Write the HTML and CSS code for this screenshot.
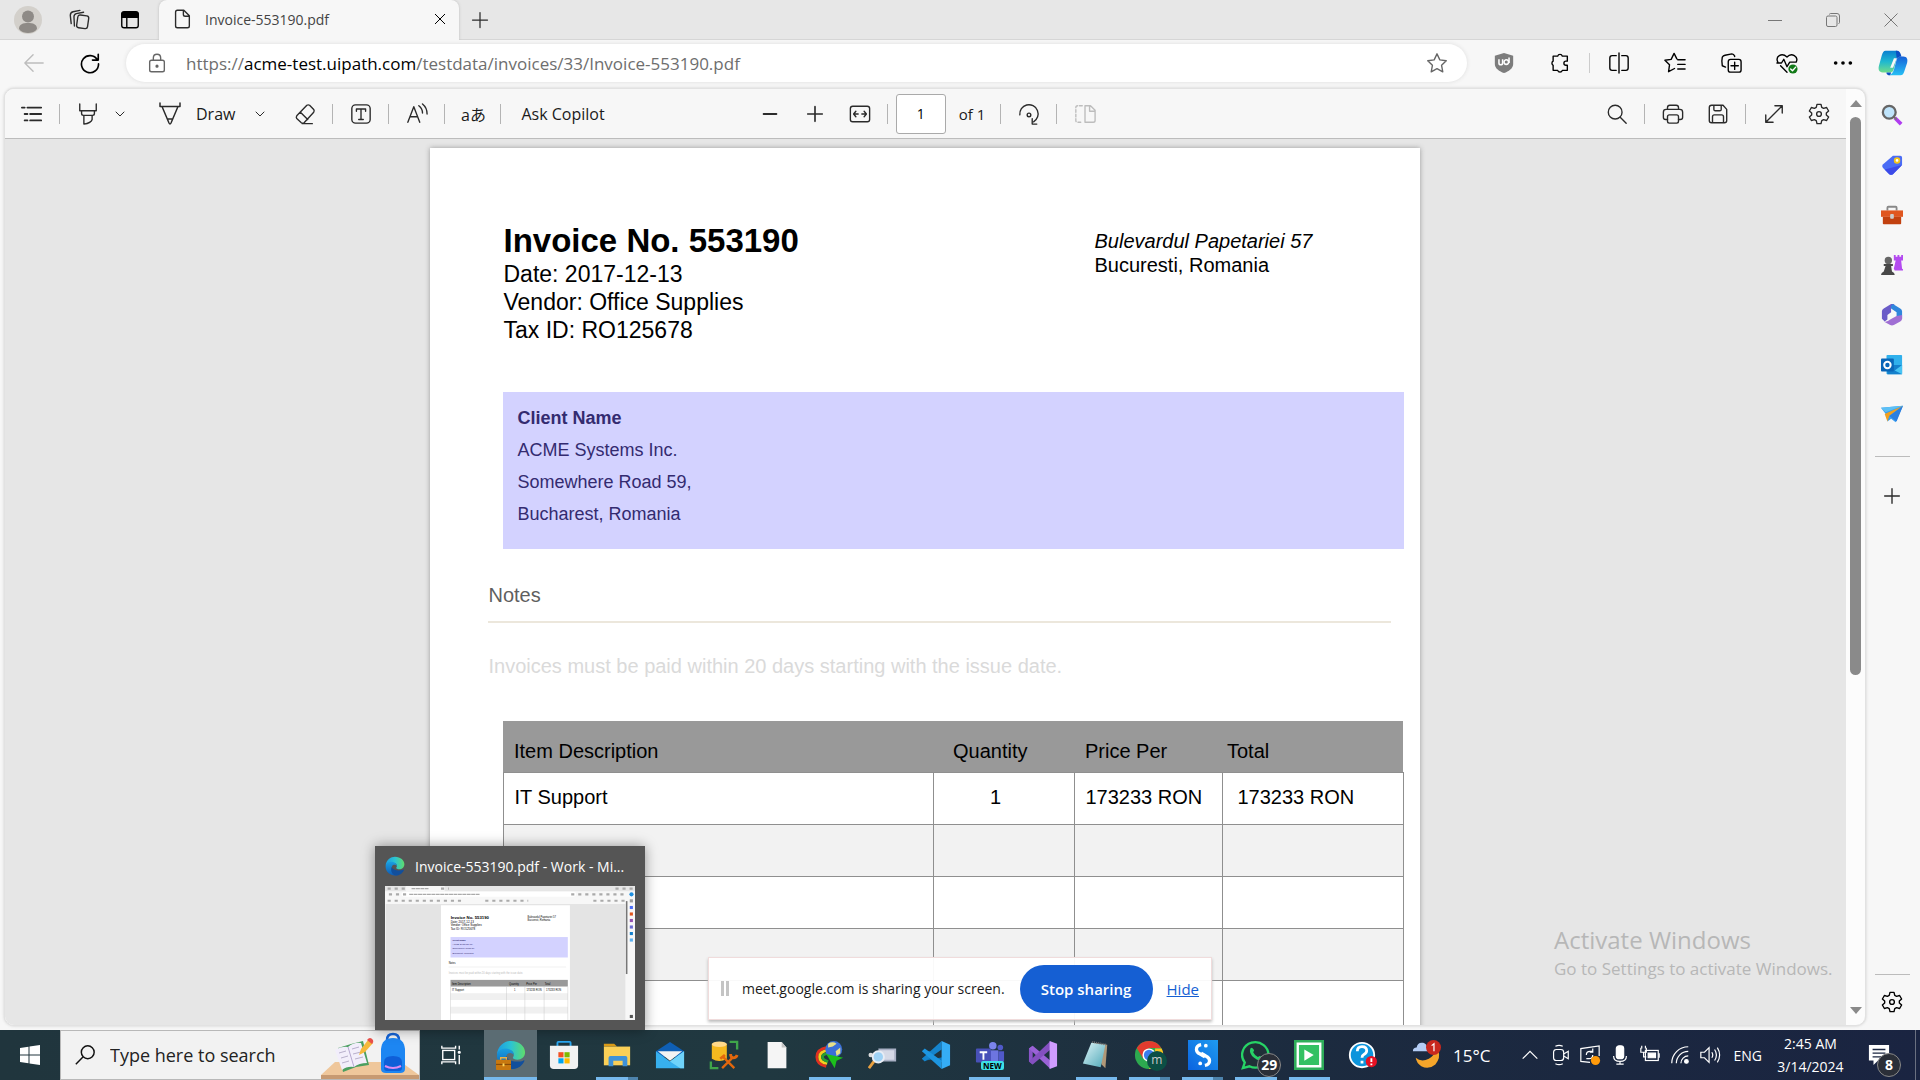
FILE: index.html
```html
<!DOCTYPE html>
<html lang="en">
<head>
<meta charset="utf-8">
<title>Invoice-553190.pdf</title>
<link rel="stylesheet" href="styles.css">
</head>
<body>
<svg class="defs" aria-hidden="true">
  <defs>
    <linearGradient id="edgeTop" x1="0" y1="0" x2="1" y2="0"><stop offset="0" stop-color="#1b9de2"/><stop offset=".5" stop-color="#2cc3d2"/><stop offset="1" stop-color="#5fdc6b"/></linearGradient>
    <linearGradient id="edgeBody" x1="0" y1="0" x2="0" y2="1"><stop offset="0" stop-color="#1aa0e0"/><stop offset="1" stop-color="#0f5bb5"/></linearGradient>
    <linearGradient id="copA" x1="0" y1="0" x2="0" y2="1"><stop offset="0" stop-color="#0a7fd0"/><stop offset=".5" stop-color="#1fb8d0"/><stop offset="1" stop-color="#6fdc8c"/></linearGradient>
    <linearGradient id="copB" x1="0" y1="0" x2="0" y2="1"><stop offset="0" stop-color="#1560d8"/><stop offset="1" stop-color="#27c0f5"/></linearGradient>
    <linearGradient id="paper" x1="0" y1="0" x2="1" y2="1"><stop offset="0" stop-color="#dff5f8"/><stop offset="1" stop-color="#4fa8b8"/></linearGradient>
    <linearGradient id="sBlue" x1="0" y1="1" x2="1" y2="0"><stop offset="0" stop-color="#0a63e0"/><stop offset="1" stop-color="#1f9bf0"/></linearGradient>
  </defs>
  <symbol id="chev" viewBox="0 0 12 12"><path d="M2 4l4 4 4-4"/></symbol>
  <symbol id="gear" viewBox="0 0 24 24"><path d="M9.800 1.500h4.400l.8 3.300 2 1.100 3.300-1 2.200 3.800-2.500 2.300v2l2.500 2.300-2.200 3.800-3.300-1-2 1.100-.8 3.300H9.800L9 19.200l-2-1.100-3.300 1-2.200-3.800L4 13v-2L1.500 8.700l2.200-3.800 3.300 1 2-1.100z"/><circle cx="12" cy="12" r="2.600"/></symbol>
  <symbol id="edge" viewBox="0 0 32 32">
    <path fill="url(#edgeTop)" d="M1 15C2 6 9 1 16 1c9 0 15 6 15 12 0 5-4 8-8 8-3 0-5-1-5-2s1-1 1-3c0-3-2-5-5-5-6 0-9 2-13 4z"/>
    <path fill="url(#edgeBody)" d="M1 17c0-5 4-8 9-8 5 0 9 3 9 7-2-3-7-3-8 1-1 6 4 12 12 12-2 1-4 2-7 2C8 31 1 25 1 17z"/>
    <path fill="#124f9c" d="M11 17c-3 5 0 14 7 14 6 0 10-4 12-8 1-1 0-2-1-1-2 1-4 1-6 1-6 0-11-2-12-6z"/>
  </symbol>
</svg>

<div class="browser">
  <header class="tabs">
    <button class="tb-btn" aria-label="Profile"><svg class="avatar" viewBox="0 0 28 28"><circle cx="14" cy="14" r="14" fill="#d3d0cb"/><circle cx="14" cy="10.500" r="6" fill="#8e8a86"/><path d="M5 23c0-5 4-6 9-6s9 1 9 6c-2 3-6 4-9 4s-7-1-9-4z" fill="#8e8a86"/></svg></button>
    <button class="tb-btn" aria-label="Workspaces"><svg class="ic" viewBox="0 0 24 24"><rect x="10" y="7" width="12" height="14" rx="2.500" transform="rotate(8 16 14)"/><path d="M7 18.500l-.5-10c0-2 1-3 2.500-3.500l8-1.500M3.500 16L2.500 7c0-2 1-3.500 3-4L13 1.500"/></svg></button>
    <button class="tb-btn" aria-label="Tab actions"><svg class="ic dark" viewBox="0 0 24 24"><rect x="3" y="3.500" width="18" height="17" rx="2.500"/><path d="M3 9V6q0-3 3-3h12q3 0 3 3v3z" fill="#000"/><path d="M8.500 9v11"/></svg></button>
    <div class="tab">
      <svg class="ic" viewBox="0 0 24 24"><path d="M5 4.500q0-2 2-2h7l6 6v11q0 2-2 2H7q-2 0-2-2zM13.500 2.500v4.500q0 2 2 2H20"/></svg>
      <span class="tab-title">Invoice-553190.pdf</span>
      <button class="close" aria-label="Close tab"><svg class="ic sm dark" viewBox="0 0 14 14"><path d="M2 2l10 10M12 2L2 12"/></svg></button>
    </div>
    <button class="new-tab" aria-label="New tab"><svg class="ic" viewBox="0 0 24 24"><path d="M12 3v18M3 12h18"/></svg></button>
    <div class="win-ctl">
      <button aria-label="Minimize"><svg class="ic sm" viewBox="0 0 14 14"><path d="M0 7.500h14"/></svg></button>
      <button aria-label="Restore"><svg class="ic sm" viewBox="0 0 14 14"><rect x=".5" y="3" width="10.500" height="10.500" rx="1.500"/><path d="M3.500 1.500q0-1 1-1H11q2.500 0 2.500 2.500v6.500q0 1-1 1"/></svg></button>
      <button aria-label="Close"><svg class="ic sm" viewBox="0 0 14 14"><path d="M.5.500l13 13M13.500.500l-13 13"/></svg></button>
    </div>
  </header>

  <nav class="addr">
    <button class="nav-btn" aria-label="Back"><svg class="ic faint" viewBox="0 0 24 24"><path d="M22 12H2M11 3l-9 9 9 9"/></svg></button>
    <button class="nav-btn" aria-label="Refresh"><svg class="ic dark" viewBox="0 0 24 24"><path stroke-width="1.800" d="M20 8.500A9.300 9.300 0 1 0 21.300 13M21 2.500v6.300h-6.300"/></svg></button>
    <div class="pill">
      <svg class="ic gray" viewBox="0 0 24 24"><rect x="4" y="9" width="16" height="12.500" rx="2"/><path d="M8 9V6.500Q8 2.500 12 2.500T16 6.500V9"/><circle cx="12" cy="15.500" r="1" fill="#444"/></svg>
      <span class="url">https://<b>acme-test.uipath.com</b>/testdata/invoices/33/Invoice-553190.pdf</span>
      <svg class="ic gray" viewBox="0 0 24 24"><path d="M12 2l3.100 6.600 7 .9-5.100 5 1.300 7.200L12 18.200l-6.300 3.500L7 14.500l-5.100-5 7-.9z"/></svg>
    </div>
    <button class="ext" aria-label="uBlock Origin"><svg class="icon-22" viewBox="0 0 24 24"><path d="M12 1l10 3v9c0 5-5 8-10 10C7 21 2 18 2 13V4z" fill="#7d7d7d"/><path d="M6.500 8v4q0 2 2 2t2-2V8M17.500 6v6" fill="none" stroke="#fff" stroke-width="1.700"/><circle cx="14.500" cy="11" r="2.500" fill="none" stroke="#fff" stroke-width="1.700"/></svg></button>
    <button class="ext" aria-label="Extensions"><svg class="ic dark" viewBox="0 0 24 24"><path d="M4.500 4.500h5a2.600 2.600 0 0 1 5 0h5.500v5.500h-1.500a2 2 0 0 0 0 4.500h1.500v5.500h-5.500a2.600 2.600 0 0 1-5 0h-5v-5.500a2.600 2.600 0 0 1 0-4.500z"/></svg></button>
    <i class="sep tall"></i>
    <button class="ext" aria-label="Split screen"><svg class="ic dark" viewBox="0 0 24 24"><path d="M9 4H4.500Q2 4 2 6.500v11Q2 20 4.500 20H9M15 4h4.500Q22 4 22 6.500v11q0 2.500-2.500 2.500H15M12 1v22"/></svg></button>
    <button class="ext" aria-label="Favorites"><svg class="ic dark" viewBox="0 0 24 24"><path d="M15 8.500h8M15 13.500h8M15 18.500h8M11.500 18L5 21.500l1-7.500-5-5 6.800-1L11 1.500l3 6"/></svg></button>
    <button class="ext" aria-label="Collections"><svg class="ic dark" viewBox="0 0 24 24"><rect x="9" y="8" width="14" height="14" rx="2.500"/><path d="M16 11v8M12 15h8M6 16.500L2.500 15q-1-5 0-9.500 1-1.500 3-2L13 2q2 0 3 2.500V5"/></svg></button>
    <button class="ext" aria-label="Browser essentials"><svg class="ic dark" viewBox="0 0 24 24"><path d="M2 11C-1 5 6 0 12 5.500 17 0 25 5 22 11M1 12h5l2.500-4 3.500 8 3-5h6M5 15l7 7"/><circle cx="18.500" cy="18.500" r="5" fill="#127a18" stroke="none"/><path d="M16 18.500l2 2 3.500-4" stroke="#fff"/></svg></button>
    <button class="ext" aria-label="More"><svg class="icon-22" viewBox="0 0 24 24"><circle cx="4" cy="12" r="2"/><circle cx="12" cy="12" r="2"/><circle cx="20" cy="12" r="2"/></svg></button>
    <button class="copilot" aria-label="Copilot"><svg class="icon-30" viewBox="0 0 32 32"><path fill="url(#copA)" d="M8 3h12c2 0 2 2 1 4l-4 15c-1 3-2 4-4 4H5c-4 0-5-3-4-7L4 8c1-3 2-5 4-5z"/><path fill="url(#copB)" d="M27 9c4 0 5 3 4 7l-3 9c-1 3-2 4-4 4H12c3-1 4-3 5-6l3-11c1-2 2-3 4-3z"/><path fill="#0b4fc4" d="M20 3c3 0 4 2 5 6-3 0-4 1-5 3l-1-9zM9 26h5l-1 3c-3 0-4-1-4-3z"/><path fill="#f7f7f7" d="M17 11h3l-4 10h-3z"/></svg></button>
  </nav>

  <div class="workspace">
    <main class="viewer">
      <div class="viewer-main">
        <div class="toolbar">
          <div class="group">
            <button class="tool" aria-label="Contents"><svg class="ic" viewBox="0 0 24 24"><path stroke-width="2" d="M7 5h15M10 12h12M10 19h12M1 5h3M4 12h3M4 19h3"/></svg></button>
            <i class="sep"></i>
            <button class="tool" aria-label="Highlight"><svg class="ic" viewBox="0 0 24 24"><path d="M3 1v7.500h18V1M5 8.500v3q0 2 2 2h10q2 0 2-2v-3M7.500 13.500V23q8-1 9-5v-4.500"/></svg></button>
            <button class="tiny" aria-label="Highlight options"><svg class="ic chev"><use href="#chev"/></svg></button>
            <button class="draw"><svg class="ic" viewBox="0 0 24 24"><path d="M2 1v3.500h20V1M4 4.500L11 21q1 2 2 0l7-16.500M9.500 17h5"/></svg>Draw</button>
            <button class="tiny" aria-label="Draw options"><svg class="ic chev"><use href="#chev"/></svg></button>
            <button class="tool erase" aria-label="Erase"><svg class="ic" viewBox="0 0 24 24"><path d="M3 14L14 2.500q1.500-1 3 0l4.500 4.500q1 1.500 0 3L11 21.500q-1.500 1-3 0L3 17q-1-1.500 0-3zM7 10l8 8M9 22.500h11"/></svg></button>
            <i class="sep"></i>
            <button class="tool" aria-label="Add text"><svg class="ic" viewBox="0 0 24 24"><rect x="2" y="2" width="20" height="20" rx="4"/><path d="M7 9V6.500h10V9M12 6.500V18M9.500 18h5"/></svg></button>
            <i class="sep"></i>
            <button class="tool" aria-label="Read aloud"><svg class="ic" viewBox="0 0 24 24"><path d="M2 21L8.500 4 15 21M4.500 15h8M14 3q4 3 4 8M18 1q5 4 5 11"/></svg></button>
            <i class="sep"></i>
            <button class="tool aa" aria-label="Translate">aあ</button>
            <i class="sep"></i>
            <button class="ask">Ask Copilot</button>
          </div>
          <div class="group mid">
            <button class="zoom" aria-label="Zoom out"><svg class="ic" viewBox="0 0 24 24"><path stroke-width="2" d="M5 12h14"/></svg></button>
            <button class="zoom" aria-label="Zoom in"><svg class="ic" viewBox="0 0 24 24"><path stroke-width="1.800" d="M12 4v16M4 12h16"/></svg></button>
            <button class="zoom" aria-label="Fit to width"><svg class="ic" viewBox="0 0 24 24"><rect x="1.500" y="3.500" width="21" height="17" rx="2.500"/><path d="M10 12H5m2.500-3L5 12l2.500 3M14 12h5m-2.500-3l2.500 3-2.500 3"/></svg></button>
            <i class="sep"></i>
            <input class="page-no" type="text" value="1" aria-label="Page number">
            <span class="of">of 1</span>
            <i class="sep"></i>
            <button class="tool" aria-label="Rotate"><svg class="ic" viewBox="0 0 24 24"><path d="M2 13A10 10 0 1 1 17 20.500M15.500 17v6h5"/><circle cx="12" cy="13" r="2"/></svg></button>
            <i class="sep"></i>
            <button class="tool" aria-label="Page view"><svg class="ic faint" viewBox="0 0 24 24"><path d="M12 3h6l5 5v11q0 2-2 2h-9zM17 3v6h6"/><path stroke-dasharray="3 2" d="M9 3H4Q2 3 2 5v14q0 2 2 2h5"/></svg></button>
          </div>
          <div class="group end">
            <button class="tool" aria-label="Find"><svg class="ic" viewBox="0 0 24 24"><circle cx="10" cy="10" r="7.500"/><path d="M15.500 15.500L22 22"/></svg></button>
            <i class="sep"></i>
            <button class="tool" aria-label="Print"><svg class="ic" viewBox="0 0 24 24"><path d="M6 18H4q-2.500 0-2.500-2.500V10q0-3 3-3h15q3 0 3 3v5.500Q22.500 18 20 18h-2M6 7V5q0-2.500 2.500-2.500h7Q18 2.500 18 5v2"/><rect x="6" y="13" width="12" height="9" rx="2"/></svg></button>
            <button class="tool save" aria-label="Save"><svg class="ic" viewBox="0 0 24 24"><path d="M5 2.500h12.500L21.500 7v12q0 2.500-2.500 2.500H5Q2.500 21.500 2.500 19V5Q2.500 2.500 5 2.500zM7.500 2.500V7q0 1.500 1.500 1.500h5q1.500 0 1.500-1.500V2.500M6 21.500V15q0-2 2-2h8q2 0 2 2v6.500"/></svg></button>
            <i class="sep"></i>
            <button class="tool" aria-label="Full screen"><svg class="ic" viewBox="0 0 24 24"><path d="M3 21L21 3M13 3h8v8M3 13v8h8"/></svg></button>
            <button class="tool save" aria-label="Settings"><svg class="ic"><use href="#gear"/></svg></button>
          </div>
        </div>
        <div class="canvas">
          <article class="sheet">
            <div class="inv-head">
              <div>
                <h1>Invoice No. 553190</h1>
                <p>Date: 2017-12-13</p>
                <p>Vendor: Office Supplies</p>
                <p>Tax ID: RO125678</p>
              </div>
              <address><em>Bulevardul Papetariei 57</em><br>Bucuresti, Romania</address>
            </div>
            <section class="client">
              <strong>Client Name</strong>
              <p>ACME Systems Inc.</p>
              <p>Somewhere Road 59,</p>
              <p>Bucharest, Romania</p>
            </section>
            <section class="notes">
              <h2>Notes</h2>
              <p>Invoices must be paid within 20 days starting with the issue date.</p>
            </section>
            <table class="items">
              <colgroup><col class="c-item"><col class="c-qty"><col class="c-price"><col></colgroup>
              <thead><tr><th>Item Description</th><th class="h-qty">Quantity</th><th>Price Per</th><th class="h-total">Total</th></tr></thead>
              <tbody>
                <tr><td>IT Support</td><td class="qty">1</td><td>173233 RON</td><td class="total">173233 RON</td></tr>
                <tr><td></td><td></td><td></td><td></td></tr>
                <tr><td></td><td></td><td></td><td></td></tr>
                <tr><td></td><td></td><td></td><td></td></tr>
                <tr><td></td><td></td><td></td><td></td></tr>
              </tbody>
            </table>
          </article>
        </div>
      </div>
      <div class="scroll"><i class="up"></i><i class="thumb"></i><i class="down"></i></div>
    </main>

    <aside class="side">
      <button aria-label="Search"><svg class="icon-22" viewBox="0 0 24 24"><path d="M15 15l7 7" stroke="#b03cf0" stroke-width="4"/><path d="M13 13l4 4" stroke="#777" stroke-width="2"/><circle cx="9" cy="9" r="7" fill="#bfe4fb" stroke="#666" stroke-width="2.500"/></svg></button>
      <button aria-label="Shopping"><svg class="icon-22" viewBox="0 0 24 24"><path d="M13 2h8q2 0 2 2v8L13 22q-2 1.500-4 0l-7-7q-1.500-2 0-3.500z" fill="#4a6cf5"/><path d="M4 17l19-5-10 10q-2 1.500-4 0z" fill="#3c4ae8"/><circle cx="17.500" cy="7" r="2.500" fill="#fff" stroke="#f5c518" stroke-width="2"/></svg></button>
      <button aria-label="Tools"><svg class="icon-22" viewBox="0 0 24 24"><path d="M7 7V4q0-1 1-1h8q1 0 1 1v3" fill="none" stroke="#888" stroke-width="2"/><path d="M0 7h24v7H0z" fill="#e0561f"/><path d="M2 14h20v7q0 1-1 1H3q-1 0-1-1z" fill="#c2410f"/><rect x="10" y="11" width="4" height="5" rx="1" fill="#ccc"/></svg></button>
      <button aria-label="Games"><svg class="icon-22" viewBox="0 0 24 24"><circle cx="8" cy="7" r="4" fill="#666"/><path d="M3 11h10v2h-2l1 6q3 1 3 4H0q0-3 3-4l2-6H3z" fill="#484848"/><path d="M14 1h2v2h2V1h2v2h2V1h2v6h-2l1 9q2 1 1 2h-9l-1-2 2-9h-2z" fill="#b44bf0"/></svg></button>
      <button aria-label="Microsoft 365"><svg class="icon-22" viewBox="0 0 24 24"><path d="M11 0q2-1 4 0l-4 3v6l-4 3v5l-3 2-3-3V8q0-2 2-3z" fill="#6a5cc8"/><path d="M13 0l8 5q2 1 2 3v8l-6-3V9l-6-4q-1-3 2-5z" fill="#2f86dc"/><path d="M23 12v4q0 2-2 3l-7 4q-2 1-4 0l-7-4q4 1 7-2l7-4z" fill="#a06fd4"/></svg></button>
      <button aria-label="Outlook"><svg class="icon-22" viewBox="0 0 24 24"><rect x="6" y="1" width="17" height="21" rx="1" fill="#30b0ec"/><path d="M6 12h17v10H7z" fill="#1480cc"/><path d="M23 12l-8 6 8 4z" fill="#48c4f4"/><rect x="0" y="5" width="14" height="14" rx="1" fill="#0a66b8"/><circle cx="7" cy="12" r="3.500" fill="none" stroke="#fff" stroke-width="2.200"/></svg></button>
      <button aria-label="Drop"><svg class="icon-22" viewBox="0 0 24 24"><path d="M0 4l24-2-8 18-5-4-4 3-1-7z" fill="#3a9ff0"/><path d="M24 2L4 11l3 8 2-6z" fill="#f0a020"/><path d="M24 2L9 13l8 6z" fill="#2b7fe0"/><path d="M0 4l24-2L5 9z" fill="#5cc0f5"/></svg></button>
      <hr>
      <button aria-label="Customize"><svg class="ic" viewBox="0 0 24 24"><path d="M12 4v16M4 12h16"/></svg></button>
      <hr class="push">
      <button aria-label="Sidebar settings"><svg class="ic dark"><use href="#gear"/></svg></button>
    </aside>
  </div>
</div>

<div class="watermark"><p>Activate Windows</p><small>Go to Settings to activate Windows.</small></div>

<div class="share">
  <i class="grip"></i>
  <span>meet.google.com is sharing your screen.</span>
  <button>Stop sharing</button>
  <a href="#hide">Hide</a>
</div>

<div class="preview">
  <div class="preview-title"><svg class="icon-20"><use href="#edge"/></svg><span>Invoice-553190.pdf - Work - Mi...</span></div>
  <svg class="mini" viewBox="0 0 1920 1029" aria-hidden="true">
    <rect width="1920" height="1029" fill="#f7f7f7"/><rect width="1920" height="40" fill="#e6e6e6"/><rect x="159" width="299" height="42" fill="#f7f7f7"/>
    <rect x="126" y="45" width="1341" height="37" rx="18" fill="#fff"/><rect x="5" y="138" width="1841" height="891" fill="#e4e4e4"/>
    <rect x="430" y="148" width="990" height="881" fill="#fff"/>
    <rect x="1850" y="116" width="12" height="560" fill="#777"/>
    <g stroke="#aaa" stroke-width="16" stroke-dasharray="24 30"><path d="M20 20h150M430 20h60M1770 20h140M30 64h140M1430 64h430M20 113h590M770 113h330M1600 113h240"/></g>
    <path d="M186 64h540M204 20h130" stroke="#aaa" stroke-width="9" stroke-dasharray="30 4"/>
    <circle cx="1893" cy="64" r="16" fill="#1e8fe0"/>
    <g stroke-width="24"><path d="M1880 114h24" stroke="#999"/><path d="M1880 165h24" stroke="#4a6cf5"/><path d="M1880 215h24" stroke="#e0561f"/><path d="M1880 265h24" stroke="#9050b0"/><path d="M1880 315h24" stroke="#6a6ad0"/><path d="M1880 365h24" stroke="#1480cc"/><path d="M1880 415h24" stroke="#5ab0f0"/><path d="M1880 1002h24" stroke="#555"/></g>
    <g font-family="Liberation Sans, Arial, sans-serif" font-size="23" fill="#000">
      <text x="504" y="251" font-size="33" font-weight="bold">Invoice No. 553190</text><text x="504" y="282">Date: 2017-12-13</text><text x="504" y="311">Vendor: Office Supplies</text><text x="504" y="339">Tax ID: RO125678</text>
      <text x="1095" y="248" font-size="20">Bulevardul Papetariei 57</text><text x="1095" y="272" font-size="20">Bucuresti, Romania</text>
      <rect x="503" y="392" width="901" height="157" fill="#d3d2ff"/>
      <g font-size="18" fill="#332b70"><text x="518" y="424" font-weight="bold">Client Name</text><text x="518" y="456">ACME Systems Inc.</text><text x="518" y="487">Somewhere Road 59,</text><text x="518" y="519">Bucharest, Romania</text></g>
      <text x="489" y="602" font-size="20">Notes</text><path d="M488 622h903" stroke="#ddd" stroke-width="3"/><text x="489" y="673" font-size="20" fill="#bbb">Invoices must be paid within 20 days starting with the issue date.</text>
      <rect x="503" y="721" width="901" height="51" fill="#999"/>
      <path d="M503 824h901v52H503zM503 928h901v52H503z" fill="#f0f0f0"/>
      <path d="M503 772v257M933 772v257M1074 772v257M1222 772v257M1404 772v257" stroke="#bbb" stroke-width="3"/>
      <g font-size="20"><text x="514" y="758">Item Description</text><text x="953" y="758">Quantity</text><text x="1085" y="758">Price Per</text><text x="1227" y="758">Total</text><text x="514" y="805">IT Support</text><text x="991" y="805">1</text><text x="1086" y="805">173233 RON</text><text x="1237" y="805">173233 RON</text></g>
    </g>
  </svg>
</div>

<footer class="taskbar">
  <button class="start" aria-label="Start"><svg class="icon-20" viewBox="0 0 20 20"><path fill="#fff" d="M0 3l8.500-1.200v7.700H0zM9.500 1.600L20 0v9.500H9.500zM0 10.500h8.500v7.700L0 17zM9.500 10.500H20V20L9.500 18.400z"/></svg></button>
  <label class="search">
    <svg class="icon-22" viewBox="0 0 24 24"><circle cx="15" cy="9" r="7" fill="none" stroke="#111" stroke-width="1.600"/><path d="M10 14L2 22" stroke="#111" stroke-width="1.600"/></svg>
    <input type="text" placeholder="Type here to search" aria-label="Type here to search">
    <svg class="art" viewBox="0 0 98 48"><path d="M14 31h66l18 13H0z" fill="#efc79b"/><path d="M0 44h98v4H0z" fill="#c79a72"/><path d="M17 17l13-4 12-3 6 24-13 2-13 5z" fill="#4a9f60"/><path d="M14 19q6-4 13-3 6-5 13-4l6 20q-8 0-13 4-7-1-12 3z" fill="#f2eefb"/><path d="M27 16l6 20" stroke="#b5a8d0"/><path d="M18 22l7-2M20 27l7-2M21 32l7-2M31 18l7-2M32 23l8-2M34 28l8-2" stroke="#b8b0cc"/><path d="M38 24l2-6 7-9 5 3-8 9z" fill="#f6b93b"/><path d="M46 9q3-4 6 0 1 2-1 4z" fill="#e8504a"/><path d="M66 9q0-6 6-6t6 6" fill="none" stroke="#1565d8" stroke-width="2.500"/><path d="M60 18q1-11 12-11t12 11v20q0 4-5 4H65q-5 0-5-4z" fill="#1d86f2"/><path d="M63 31q0-6 9-6t9 6v6q0 3-3 3H66q-3 0-3-3z" fill="#0f5fd8"/><path d="M64 35q8 4 16 0" stroke="#e08cf0" stroke-width="2" fill="none"/></svg>
  </label>
  <button class="taskview" aria-label="Task view"><svg class="icon-22" viewBox="0 0 24 24" fill="none" stroke="#fff" stroke-width="1.500"><rect x="3" y="7" width="13" height="10"/><path d="M2 2v2.500h15V2M2 22v-2.500h15V22M21 2v4M21 12v10"/><circle cx="21" cy="9" r="1" fill="#fff"/></svg></button>

  <div class="apps">
    <button class="app on run" aria-label="Edge"><svg viewBox="0 0 32 32"><use href="#edge"/><rect x="0" y="21" width="16" height="11" rx="1" fill="#c8780f"/><path d="M5 21v-2h6v2" fill="none" stroke="#f0b040" stroke-width="1.500"/><path d="M0 26h16" stroke="#7a4205"/><rect x="7" y="25" width="2" height="3" fill="#ffd75a"/></svg></button>
    <button class="app" aria-label="Store"><svg viewBox="0 0 32 32"><path d="M9 7V3q0-1 1-1h12q1 0 1 1v4" fill="none" stroke="#2aa5ee" stroke-width="2"/><path d="M1 6h30v21q0 4-4 4H5q-4 0-4-4z" fill="#f2f2f2"/><path d="M10 13h5.500v5.500H10z" fill="#f25022"/><path d="M16.500 13H22v5.500h-5.500z" fill="#7fba00"/><path d="M10 19.500h5.500V25H10z" fill="#00a4ef"/><path d="M16.500 19.500H22V25h-5.500z" fill="#ffb900"/></svg></button>
    <button class="app run stack" aria-label="File Explorer"><svg viewBox="0 0 32 32"><path d="M2 4h11l3 3H2z" fill="#d99a17"/><path d="M2 7h28v20H2z" fill="#fbd057"/><path d="M7 28V19q0-2 2-2h16q2 0 2 2v9h-5v-6H12v6z" fill="#3f92d8"/></svg></button>
    <button class="app" aria-label="Mail"><svg viewBox="0 0 32 32"><path d="M1 12L16 2l15 10v6H1z" fill="#0f5fb4"/><path d="M3 12h26L16 22z" fill="#f3f3f3"/><path d="M1 12l15 11 15-11v18H1z" fill="#37b0ee"/><path d="M31 12L16 23l11 7h4z" fill="#6fd3fa"/></svg></button>
    <button class="app" aria-label="SQL Server Management Studio"><svg viewBox="0 0 32 32"><path d="M3 4v16q8 5 16 0V4z" fill="#f5b91f"/><ellipse cx="11" cy="4.500" rx="8" ry="3" fill="#ffd98a"/><path d="M22 2h8v8M2 23v7h8" fill="none" stroke="#3fa64a" stroke-width="2.500"/><path d="M15 18l12 12M26 18L14 30" stroke="#e2670d" stroke-width="2.500" fill="none"/><path d="M12 20l5-4M23 15q0 4 3 4t4-3" stroke="#e2670d" stroke-width="3" fill="none"/></svg></button>
    <button class="app" aria-label="Document"><svg viewBox="0 0 32 32"><path d="M6 2h15l5 6v22H6z" fill="#f5f5f5"/><path d="M21 2v6h5z" fill="#c4c4c4"/></svg></button>
    <button class="app run" aria-label="Internet Download Manager"><svg viewBox="0 0 32 32"><g fill="none" stroke-width="3"><path d="M13 8Q2 10 2 18t10 10" stroke="#e03020"/><path d="M14 11Q5 12 5 18t8 7" stroke="#f5d020"/><path d="M15 14q-7 1-7 4t6 5" stroke="#28a030"/></g><circle cx="20" cy="10" r="9" fill="#3b6fd8"/><path d="M14 4q5-3 9 0l-4 3-5 1zM22 12l5-4v6l-4 3z" fill="#e8e088"/><path d="M12 15l18 4-7 3-2 8z" fill="#1cc01c"/></svg></button>
    <button class="app" aria-label="Inspector"><svg viewBox="0 0 32 32"><path d="M11 9h19v14H13z" fill="#aab1c5"/><path d="M13 11h15v10H14z" fill="#d5d9e6"/><circle cx="3" cy="16" r="2.500" fill="#ddd"/><path d="M7 22l-6 8" stroke="#e8a040" stroke-width="3"/><circle cx="11" cy="18" r="6" fill="#9fd2f5" stroke="#e8edf5" stroke-width="2"/></svg></button>
    <button class="app" aria-label="Visual Studio Code"><svg viewBox="0 0 32 32"><path d="M1 12l3-2 20 15v-7L4 22l-3-2 10-8z" fill="#0b76bd"/><path d="M1 20L22 1v9L4 23z" fill="#1584cc"/><path d="M1 12l3-3 18 13v9z" fill="#1d95e0"/><path d="M22 1l9 4v22l-9 4z" fill="#35adf5"/></svg></button>
    <button class="app run" aria-label="Teams"><svg viewBox="0 0 32 32"><circle cx="19" cy="6" r="4" fill="#7b83eb"/><circle cx="27" cy="8" r="3" fill="#5059c9"/><path d="M14 11h11v16H14z" fill="#6d75e0"/><path d="M25 12h6v10q-2 3-6 3z" fill="#5059c9"/><rect x="1" y="9" width="16" height="15" rx="1" fill="#4850b8"/><path d="M5 13h8M9 13v8" stroke="#fff" stroke-width="2"/></svg><span class="new">NEW</span></button>
    <button class="app" aria-label="Visual Studio"><svg viewBox="0 0 32 32"><path d="M1 9l4-3v20l-4-3z" fill="#8a55c8"/><path d="M5 6l19 16v9L1 9z" fill="#9a62d6"/><path d="M5 26L24 10V1L1 23z" fill="#8450c0"/><path d="M23 1l8 3v24l-8 3z" fill="#d09cff"/></svg></button>
    <button class="app run" aria-label="Notepad"><svg viewBox="0 0 32 32"><path d="M12 3l16 2-2 25-4-4z" fill="#b09878"/><path d="M11 3l15 2-5 24L2 25z" fill="url(#paper)"/><path d="M12 2l15 3" stroke="#777" stroke-width="2" stroke-dasharray="1 1"/></svg></button>
    <button class="app run stack" aria-label="Chrome"><svg viewBox="0 0 32 32"><circle cx="16" cy="16" r="15" fill="#2da94f"/><path d="M3 8.500A15 15 0 0 1 29 8.500H16l-6.500 11z" fill="#e33b2e"/><path d="M29.500 9A15 15 0 0 1 16 31l6.500-11V9z" fill="#fcc31e"/><circle cx="16" cy="16" r="7" fill="#fff"/><circle cx="16" cy="16" r="5.500" fill="#3b7ded"/></svg><span class="who">m</span></button>
    <button class="app run stack" aria-label="Studio"><svg viewBox="0 0 32 32"><path d="M0 0h32v32H0z" fill="url(#sBlue)"/><path d="M14 5q-5 1-5 5 0 3 4 5l5 3M18 27q5-1 5-5 0-3-4-5l-5-3" fill="none" stroke="#fff" stroke-width="3.500"/><circle cx="19" cy="6" r="2" fill="#fff"/><circle cx="13" cy="25" r="2" fill="#fff"/></svg></button>
    <button class="app run" aria-label="WhatsApp"><svg viewBox="0 0 32 32"><path d="M4 24A14 13.500 0 1 1 9 28l-7 2z" fill="#203038" stroke="#27d366" stroke-width="2.500"/><path d="M10 9q2-2 4 2l-1 2q2 4 5 5l2-1q4 1 2 4-3 2-8-2-6-5-4-10z" fill="#27d366"/></svg><span class="count">29</span></button>
    <button class="app run" aria-label="Recorder"><svg viewBox="0 0 32 32"><path d="M0 0h32v32H0z" fill="#2fae5a"/><path d="M4 4h24v24H4z" fill="#34c163" stroke="#fff" stroke-width="2.500"/><path d="M11 10l10 6-10 6z" fill="#fff"/></svg></button>
    <button class="app" aria-label="Get help"><svg viewBox="0 0 32 32"><circle cx="16" cy="16" r="13" fill="#0d95dc" stroke="#fff" stroke-width="2"/><path d="M11 12q0-5 5-5t5 4.500q0 2.500-3 4-2 1-2 3.500M16 22v3" fill="none" stroke="#fff" stroke-width="3"/><circle cx="26" cy="23" r="6" fill="#e81123"/><path d="M26 19.500v4M26 25v2" stroke="#fff" stroke-width="2"/></svg></button>
  </div>

  <div class="tray">
    <button class="weather"><svg class="icon-30" viewBox="0 0 32 32"><path d="M29 11q3 8-3 15-7 6-15 2-5-3-6-9 6 5 14 1 7-4 6-9z" fill="#f5a52a"/><path d="M2 12q0-4 4-4 1-6 7-5 4 1 4 5 3 1 2 4z" fill="#b4cdf5"/><circle cx="24" cy="8" r="8" fill="#c8281e"/><path d="M22 6l2.500-2v8" stroke="#fff" stroke-width="1.300" fill="none"/></svg>15°C</button>
    <svg class="tr" viewBox="0 0 24 24"><path d="M4 16l8-8 8 8"/></svg>
    <svg class="tr" viewBox="0 0 24 24"><rect x="5" y="6" width="11" height="12" rx="3"/><path d="M16 11l5-3v8l-5-3M7 2.500q4-2 8 0M7 21.500q4 2 8 0"/></svg>
    <svg class="tr" viewBox="0 0 24 24"><path d="M12 20l-10-1V5l20-3v11M8 12q0-4 4-4h3m0-3v4h-3M15 12q0 4-4 4H8"/><circle cx="18" cy="18" r="5" fill="#ff9a0a" stroke="none"/></svg>
    <svg class="tr" viewBox="0 0 24 24"><rect x="8" y="2" width="8" height="14" rx="3" fill="#fff"/><path d="M5 13q0 6 7 6t7-6M12 19v3M8 22h8"/></svg>
    <svg class="tr" viewBox="0 0 24 24"><rect x="7" y="7" width="14" height="11"/><path d="M10 10h8v5h-8z" fill="#fff"/><path d="M22 10v5M2 4v5h6V4M3 2v3M7 2v3M5 9v5h3" /></svg>
    <svg class="tr" viewBox="0 0 24 24"><path d="M3 21A18 18 0 0 1 21 3M8 21A13 13 0 0 1 21 8M13 21a8 8 0 0 1 8-8"/><circle cx="19" cy="19" r="2" fill="#fff"/></svg>
    <svg class="tr" viewBox="0 0 24 24"><path d="M2 9h4l5-5v16l-5-5H2zM14 9q2 3 0 6M17 6q4 6 0 12M20 4q5 8 0 16"/></svg>
    <span class="lang">ENG</span>
    <div class="clock"><time>2:45 AM</time><time>3/14/2024</time></div>
    <button class="notif" aria-label="Notifications"><svg viewBox="0 0 24 24"><path d="M1 1h22v17H11l-5 5v-5H1z" fill="#fff"/><path d="M5 6h14M5 10h14M5 14h10" stroke="#1b2640" stroke-width="1.500"/></svg><span class="count">8</span></button>
  </div>
</footer>
</body>
</html>
```
FILE: styles.css
```css
* { box-sizing: border-box; }
body, h1, h2, p, address { margin: 0; }
body {
  height: 100vh;
  display: flex;
  flex-direction: column;
  overflow: hidden;
  position: relative;
  background: #f7f7f7;
  color: #1b1b1b;
  font: 16px "Open Sans", "Noto Sans", sans-serif;
}
button { border: 0; padding: 0; background: none; font: inherit; color: inherit; display: flex; align-items: center; justify-content: center; flex: none; }
svg { display: block; flex: none; }
.defs { position: absolute; width: 0; height: 0; }
.ic { width: 22px; height: 22px; fill: none; stroke: #2b2b2b; stroke-width: 1.5; stroke-linejoin: round; stroke-linecap: round; }
.ic.sm { width: 14px; height: 14px; stroke-width: 1; stroke-linecap: butt; }
.ic.dark { stroke: #000; }
.ic.gray { stroke: #666; }
.ic.faint { stroke: #bdbdbd; }
.ic.chev { width: 12px; height: 12px; stroke-width: 1; }
.icon-20 { width: 20px; height: 20px; }
.icon-22 { width: 22px; height: 22px; }
.icon-30 { width: 30px; height: 30px; }

.browser { flex: 1; min-height: 0; display: flex; flex-direction: column; }

.tabs { height: 40px; flex: none; display: flex; align-items: center; background: #e7e7e7; box-shadow: inset 0 -1px #d6d6d6; }
.tb-btn { width: 51px; }
.tb-btn:first-child { width: 53px; padding-left: 2px; }
.avatar { width: 28px; height: 28px; }
.tab { width: 300px; height: 40px; margin-left: 4px; padding: 0 12px 2px; display: flex; align-items: center; gap: 12px; background: #f7f7f7; border-radius: 8px 8px 0 0; box-shadow: 0 0 3px #bbb; clip-path: inset(0 -3px 0 -3px); }
.tab-title { flex: 1; font-size: 14px; color: #444; }
.new-tab { width: 42px; }
.new-tab .ic { width: 20px; height: 20px; }
.win-ctl { margin-left: auto; display: flex; }
.win-ctl button { width: 58px; height: 40px; }
.win-ctl .ic { stroke: #777; }

.addr { height: 48px; flex: none; display: flex; align-items: center; padding: 0 5px 2px 6px; }
.nav-btn { width: 56px; }
.pill { flex: 1; height: 38px; margin: 0 9px 0 8px; padding: 0 19px 0 20px; border-radius: 19px; background: #fff; display: flex; align-items: center; gap: 18px; box-shadow: 0 0 4px #ddd; }
.url { flex: 1; font-size: 17px; color: #6e6e6e; white-space: nowrap; }
.url b { font-weight: 400; color: #000; }
.ext { width: 56px; }
.copilot { width: 44px; }
.sep { width: 1px; height: 20px; margin: 0 8px 0 7px; background: #b4b4b4; flex: none; }
.sep.tall { margin: 0 1px; background: #ccc; }

.workspace { flex: 1; min-height: 0; display: flex; }
.viewer { flex: 1; min-width: 0; display: flex; margin: 0 0 4px 4px; border: 1px solid #e2e2e2; border-radius: 10px; overflow: hidden; background: #fcfcfc; box-shadow: 0 0 3px #ccc; }
.viewer-main { flex: 1; min-width: 0; display: flex; flex-direction: column; }
.toolbar { height: 50px; flex: none; display: grid; grid-template-columns: 1fr auto 1fr; background: #f7f7f7; border-bottom: 1px solid #bcbcbc; padding: 0 7px; }
.group { display: flex; align-items: center; }
.mid { padding-left: 4px; }
.end { justify-content: flex-end; }
.tool { width: 40px; height: 40px; }
.zoom { width: 40px; margin-right: 5px; }
.zoom + .sep { margin-left: 2px; }
.tiny { width: 24px; height: 40px; }
.draw { margin: 0 13px 0 26px; gap: 14px; }
.draw .ic { width: 24px; height: 24px; }
.erase { margin-left: 13px; }
.save { margin-left: 5px; }
.aa { font: 16px "Open Sans", "Noto Sans CJK JP", sans-serif; }
.ask { margin-left: 12px; }
.page-no { width: 50px; height: 40px; border: 1px solid #aaa; border-radius: 3px; background: #fff; text-align: center; font: inherit; font-size: 14px; padding: 0; }
.of { margin: 0 8px 0 13px; font-size: 15px; }
.canvas { flex: 1; min-height: 0; overflow: hidden; background: #e6e6e6; padding: 9px 2px 0 0; }
.scroll { width: 19px; flex: none; display: flex; flex-direction: column; align-items: center; padding: 11px 0; }
.up, .down { border: 6px solid transparent; }
.up { border-top: 0; border-bottom: 7px solid #8a8a8a; }
.down { border-bottom: 0; border-top: 7px solid #8a8a8a; margin-top: auto; }
.thumb { width: 11px; flex: 0 0 61%; margin-top: 10px; border-radius: 6px; background: #8a8a8a; }

.sheet { width: 990px; height: 1200px; margin: 0 auto; padding: 74px 16px 0 73px; background: #fff; color: #000; box-shadow: 0 0 5px #999; font: 20px "Liberation Sans", Arial, sans-serif; }
.inv-head { height: 170px; display: flex; font-size: 23px; line-height: 28px; }
.inv-head > div { width: 592px; padding-left: 1px; }
h1 { font-size: 33px; line-height: 38px; }
address { font-style: normal; font-size: 20px; line-height: 24px; padding-top: 7px; }
.client { height: 157px; padding: 10px 15px; background: #d3d2ff; color: #332b70; font-size: 18px; line-height: 32px; }
.notes { margin: 32px 13px 0 -15px; }
h2 { font: 20px/28px "Liberation Sans", Arial, sans-serif; color: #5f5f5f; padding: 0 0 12px 1px; border-bottom: 2px solid #ece7dc; }
.notes p { padding: 31px 0 0 1px; line-height: 24px; color: #dadada; }
.items { width: 100%; margin-top: 43px; table-layout: fixed; border-collapse: collapse; text-align: left; }
.c-item { width: 430px; }
.c-qty { width: 141px; }
.c-price { width: 148px; }
.items th { height: 51px; padding: 10px 0 0 11px; background: #999; font-weight: 400; }
.items td { height: 52px; padding: 0 0 2px 11px; border: 1px solid #8f8f8f; }
.items .h-qty { padding-left: 20px; }
.items .h-total { padding-left: 5px; }
.items .qty { padding: 0 16px 2px 0; text-align: center; }
.items .total { padding-left: 15px; }
.items tbody tr:nth-child(even) { background: #f2f2f2; }

.side { width: 54px; flex: none; display: flex; flex-direction: column; align-items: center; padding: 2px 2px 3px 0; }
.side button { width: 50px; height: 50px; }
.side hr { width: 35px; height: 1px; border: 0; margin: 16px 0 14px; background: #bcbcbc; flex: none; }
.side .push { margin: auto 0 2px; }

.watermark { position: absolute; left: 1554px; top: 923px; color: #b7b7b7; line-height: 34px; pointer-events: none; }
.watermark p { font-size: 24px; }
.watermark small { font-size: 17px; line-height: 24px; display: block; }

.share { position: absolute; left: 708px; bottom: 60px; width: 504px; height: 63px; display: flex; align-items: center; padding: 0 12px; border: 1px solid #f0dcdc; background: #fffffff2; box-shadow: 0 2px 3px #bbb; font-size: 15px; white-space: nowrap; }
.grip { width: 8px; height: 15px; border: solid #c4c4c4; border-width: 0 3px; margin-right: 13px; flex: none; }
.share span { flex: 1; font-size: 14px; }
.share button { width: 133px; height: 48px; border-radius: 24px; background: #155fd3; color: #fff; font-weight: 600; margin-right: 14px; }
.share a { color: #155fd3; }

.preview { position: absolute; left: 375px; bottom: 50px; width: 270px; height: 184px; padding: 10px; background: #555; box-shadow: 0 0 12px #0006; color: #fff; }
.preview-title { display: flex; align-items: center; gap: 10px; height: 20px; margin-bottom: 10px; font-size: 14px; white-space: nowrap; }
.mini { width: 250px; height: 134px; }

.taskbar { height: 50px; flex: none; display: flex; background: linear-gradient(90deg, #20353d, #203840 40%, #1c2b3f 68%, #1a2441); color: #fff; }
.start { width: 60px; }
.search { width: 360px; display: flex; align-items: center; background: #f2f2f2; border: 1px solid #b8b8b8; padding-left: 13px; }
.search input { flex: 1; min-width: 0; border: 0; background: none; padding: 0 0 0 14px; font: inherit; font-size: 18px; outline: 0; }
.search input::placeholder { color: #222; opacity: 1; }
.art { width: 98px; height: 48px; }
.taskview { width: 64px; padding-right: 3px; }
.apps { width: 905px; display: flex; }
.app { flex: 1; position: relative; }
.app > svg { width: 30px; height: 30px; }
.on { background: #5b6c73; }
.run::after { content: ""; position: absolute; left: 6px; right: 6px; bottom: 0; height: 3px; background: #76b9ed; }
.on::after { left: 0; right: 0; }
.stack::after { background: linear-gradient(90deg, #76b9ed 75%, #4d83ac 75%); }
.new, .who, .count { position: absolute; font-weight: 700; }
.new { left: 18px; bottom: 10px; padding: 0 2px; border-radius: 2px; background: #3de0e6; color: #000; font-size: 8px; line-height: 9px; }
.who { left: 24px; bottom: 9px; width: 20px; height: 20px; border-radius: 10px; background: #0c4f45; color: #ccc; font-size: 12px; line-height: 17px; font-weight: 400; }
.count { left: 28px; top: 23px; width: 24px; height: 24px; border: 1px solid #888; border-radius: 12px; background: #2b2f38; font-size: 14px; line-height: 21px; text-align: center; }
.tray { flex: 1; display: flex; align-items: center; padding-left: 22px; border-right: 1px solid #6a7080; margin-right: 4px; }
.weather { gap: 12px; font-size: 17px; margin-right: 29px; }
.tr { width: 22px; height: 22px; margin-right: 8px; fill: none; stroke: #fff; stroke-width: 1.3; flex: none; }
.lang { font-size: 14px; margin-left: 4px; }
.clock { flex: 1; display: flex; flex-direction: column; align-items: center; font-size: 14px; line-height: 23px; }
.notif { width: 40px; height: 50px; margin-right: 16px; position: relative; }
.notif svg { width: 22px; height: 22px; }
.notif .count { left: 18px; }
```
